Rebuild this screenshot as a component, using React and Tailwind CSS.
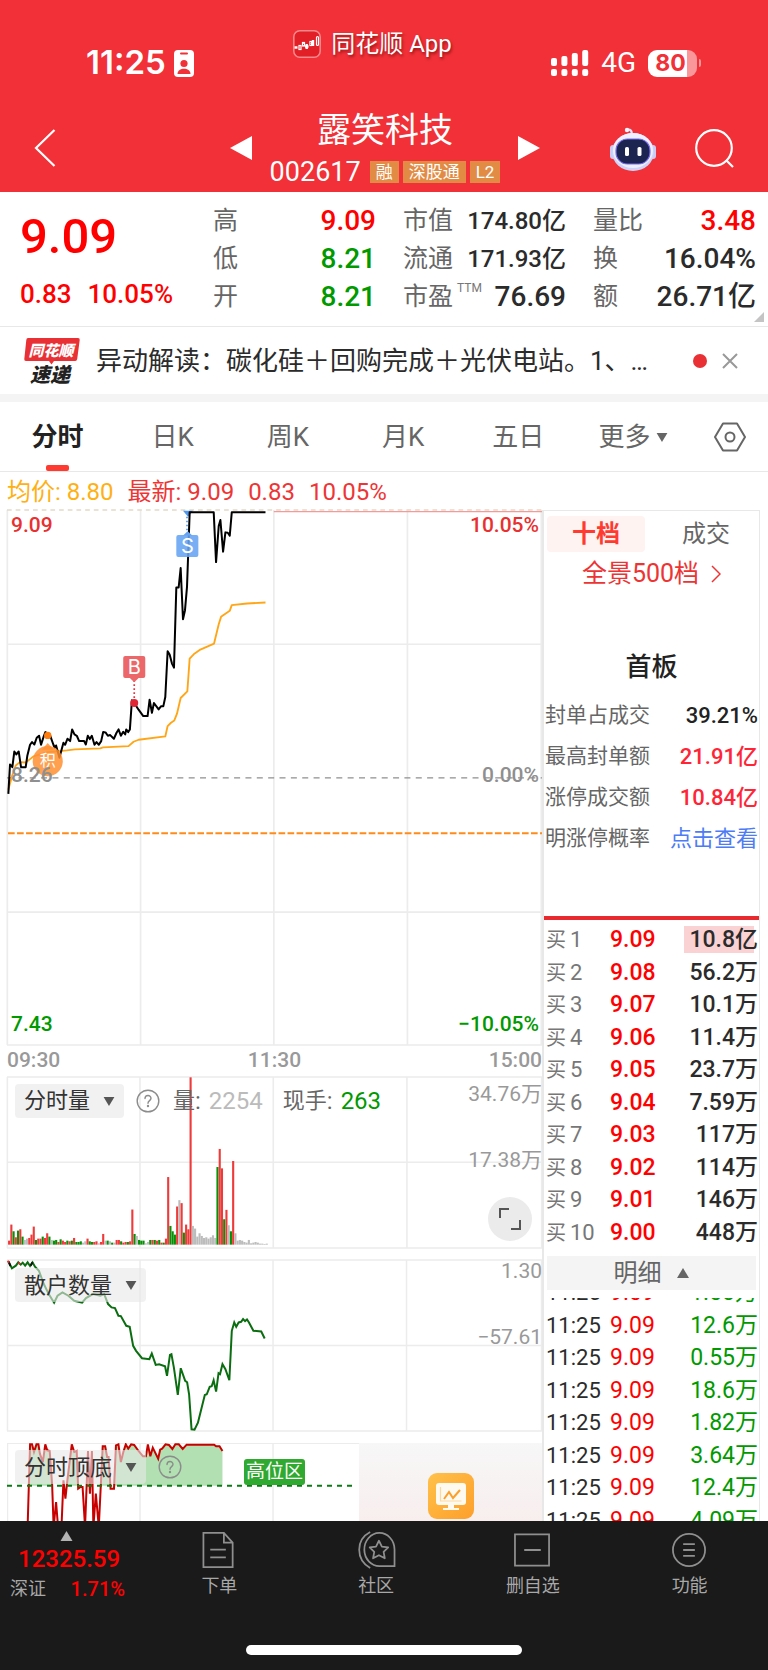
import React, { useState } from 'react'
import clsx from 'clsx'

const GRAY = '#ececec'

const quoteColumns = [
  [
    { label: '高', value: '9.09', color: 'text-[#ff0000]' },
    { label: '低', value: '8.21', color: 'text-[#009900]' },
    { label: '开', value: '8.21', color: 'text-[#009900]' },
  ],
  [
    { label: '市值', value: '174.80亿', small: true },
    { label: '流通', value: '171.93亿', small: true },
    { label: '市盈', value: '76.69', sup: 'TTM' },
  ],
  [
    { label: '量比', value: '3.48', color: 'text-[#ff0000]' },
    { label: '换', value: '16.04%' },
    { label: '额', value: '26.71亿' },
  ],
]

const periods = ['分时', '日K', '周K', '月K', '五日', '更多']

const boardStats = [
  { label: '封单占成交', value: '39.21%', color: 'text-[#222222]' },
  { label: '最高封单额', value: '21.91亿', color: 'text-[#ff2436]' },
  { label: '涨停成交额', value: '10.84亿', color: 'text-[#ff2436]' },
]

const bids = [
  ['9.09', '10.8亿'],
  ['9.08', '56.2万'],
  ['9.07', '10.1万'],
  ['9.06', '11.4万'],
  ['9.05', '23.7万'],
  ['9.04', '7.59万'],
  ['9.03', '117万'],
  ['9.02', '114万'],
  ['9.01', '146万'],
  ['9.00', '448万'],
]

const ticks = ['1.00万', '12.6万', '0.55万', '18.6万', '1.82万', '3.64万', '12.4万', '4.09万']

const PRICE =
  '25,880 30,792 37,800 43,753 49,762 56,753 63,800 77,800 82,765 90,733 96,725 103,732 110,712 117,706 123,733 131,708 136,695 143,700 150,705 160,733 164,742 168,735 178,772 190,727 195,733 202,715 210,722 216,687 223,702 230,706 237,722 252,722 257,732 263,706 269,716 275,706 283,733 289,725 296,733 303,722 309,695 316,696 323,706 330,704 341,715 349,697 355,687 362,706 369,694 375,702 378,687 384,695 389,687 395,600 402,608 415,628 429,647 442,647 448,598 455,637 461,608 475,627 482,618 489,618 495,590 502,453 508,463 515,490 521,502 528,262 535,262 541,204 548,357 554,330 560,260 568,37 640,37 647,186 655,78 660,60 668,155 675,97 682,98 688,107 694,37 795,37'
const AVERAGE =
  '25,868 35,830 47,795 60,785 77,786 90,776 100,768 143,755 178,752 200,750 225,747 300,744 309,741 385,737 400,724 415,718 495,708 502,677 512,667 522,660 530,640 541,593 561,573 568,475 580,462 600,448 641,430 655,372 662,350 676,340 688,332 694,315 740,310 795,307'
const RETAIL =
  '18,62 25,83 33,75 38,65 43,72 47,66 52,75 57,65 62,76 67,65 72,78 80,90 90,130 100,160 111,186 118,165 128,155 140,165 152,180 168,186 176,172 190,160 205,165 213,160 221,190 228,200 235,202 242,225 247,226 258,255 265,258 272,315 278,330 290,352 305,355 310,338 318,372 325,370 337,376 341,405 347,342 350,340 355,380 363,462 369,382 378,420 382,424 386,460 391,565 397,566 404,545 418,462 422,460 428,438 432,436 436,418 441,452 446,397 449,400 454,370 460,385 468,418 473,270 478,245 482,258 487,245 492,243 496,235 500,241 504,236 508,245 517,270 533,272 540,293'
const TOP_BOTTOM =
  '57,860 62,612 66,612 70,635 75,612 79,612 82,640 88,665 93,612 97,630 102,632 107,735 110,860 115,785 119,860 126,860 130,720 134,775 138,720 147,612 152,635 157,632 160,745 165,740 169,740 174,860 180,632 184,760 188,632 191,860 196,760 202,860 210,618 215,618 219,650 222,650 226,745 233,745 237,615 242,612 247,665 252,635 257,612 262,625 268,612 274,614 283,632 292,648 298,648 302,612 307,648 312,622 323,655 327,628 331,625 338,612 345,614 352,626 358,612 365,612 373,626 381,613 437,613 441,618 448,618 454,632'

// one entry per minute: bar height + r(ise) / g(reen fall) / w (flat)
const VOLUME =
  '12r 60r 40g 22r 42g 46r 24g 14w 18w 20r 30r 54r 14g 18r 18r 24g 20r 34r 24g 14w 12g 14g 8r 16g 12r 8r 12g 10r 12g 20r 8g 8g 10g 6w 10w 18r 10g 8g 8r 10r 4w 8r 32r 12w 12g 10w 6g 6w 14r 14r 10g 6r 8r 8g 10r 105r 32g 26w 14g 12g 12g 4w 8w 14g 14r 14g 12r 14g 6r 6g 18r 202r 56g 40g 30g 114r 133w 124r 36g 60r 46r 500r 56w 48w 24w 34w 26w 20w 22w 18w 22w 28w 20w 232g 286r 228r 76g 104r 58w 40g 250r 34w 12w 14w 12w 8w 6w 14w 4w 6w 8w 6w 3w 3w 2w 3w'
    .split(' ')
    .map(s => ({ h: parseInt(s, 10), kind: s.slice(-1) }))
const VOLUME_COLORS = { r: '#ee3a3a', g: '#079007', w: '#bcbcbc' }

function Caret({ up, className }) {
  return (
    <svg viewBox="0 0 12 10" className={className} fill="currentColor" aria-hidden="true">
      <path d={up ? 'M6 0l6 10H0z' : 'M0 0h12L6 10z'} />
    </svg>
  )
}

function Help() {
  return (
    <button aria-label="说明" className="text-[#8c8c8c]">
      <svg viewBox="0 0 24 24" className="size-6" fill="none" stroke="currentColor" strokeWidth="1.4" strokeLinecap="round">
        <circle cx="12" cy="12" r="10.8" />
        <path d="M9 9.600c0-4 6-4 6-.3 0 2.300-3 2.400-3 4.900" />
        <circle cx="12" cy="17" r=".5" fill="currentColor" />
      </svg>
    </button>
  )
}

function IndicatorButton({ children }) {
  return (
    <button className="flex h-[34px] items-center gap-[13px] rounded-[4px] bg-[#e8e8e8]/60 pr-[9px] pl-[9px] text-[22px] text-[#333333]">
      {children}
      <Caret className="h-[9px] w-3 text-[#555555]" />
    </button>
  )
}

function StatusBar() {
  return (
    <div className="flex h-[104px] items-start justify-between pr-[67px] pl-[86px]">
      <div className="flex h-[126px] items-center gap-2 font-['Inter',sans-serif]">
        <span className="text-[33px] font-semibold">11:25</span>
        <svg viewBox="0 0 20 27" className="h-[27px] w-5">
          <rect width="20" height="27" rx="4" fill="#fff" />
          <rect x="6" y="2.500" width="8" height="2" rx="1" fill="#f13037" />
          <circle cx="10" cy="13.500" r="3.600" fill="#f13037" />
          <path d="M3.500 24c0-7 13-7 13 0z" fill="#f13037" />
        </svg>
      </div>
      <div className="flex h-[88px] items-center gap-[10px]">
        <svg viewBox="0 0 28 28" className="size-7">
          <rect x=".8" y=".8" width="26.400" height="26.400" rx="6" fill="#e21f27" stroke="#f78a8d" strokeWidth="1.500" />
          <g stroke="#fff" strokeWidth="1.200" fill="#fff">
            <path d="M1.500 17.500h3M12 16.500h3.500M13.700 14v5M20 10v6" strokeWidth="2.400" />
            <rect x="6" y="15.500" width="2" height="4" fill="none" />
            <rect x="9.500" y="12.500" width="2" height="3.500" fill="none" />
            <rect x="17" y="11.500" width="1.500" height="4" fill="none" />
            <rect x="23.500" y="6.500" width="2" height="9" rx="1" fill="none" />
          </g>
        </svg>
        <span className="text-[24px] [text-shadow:1px_2px_3px_rgba(80,0,0,0.6)]">同花顺 App</span>
      </div>
      <div className="flex h-[126px] items-center font-['Inter',sans-serif]">
        <svg viewBox="0 0 38 26" className="h-[26px] w-[38px]" fill="#fff">
          {[0, 1, 2, 3].map(i => (
            <g key={i}>
              <rect x={i * 10.400} y={[8, 6, 3, 0][i]} width="6" height={[8, 10, 13, 16][i]} rx="2" />
              <rect x={i * 10.400} y="19" width="6" height="7" rx="2" />
            </g>
          ))}
        </svg>
        <span className="ml-3 font-['Roboto',sans-serif] text-[28px]">4G</span>
        <span className="ml-3 flex h-[27px] w-[49px] items-center justify-center rounded-[9px] bg-[linear-gradient(90deg,#fff_80%,#f9979b_80%)] pr-1 text-[23px] font-bold text-[#f13037]">
          80
        </span>
        <span className="ml-[2px] h-2 w-[2px] rounded-r bg-[#f9979b]" />
      </div>
    </div>
  )
}

function Robot() {
  return (
    <svg viewBox="0 0 46 44" className="h-11 w-[46px]">
      <path d="M21 8c2-4-1-6-4-5" stroke="#dfe3fb" strokeWidth="2.200" fill="none" strokeLinecap="round" />
      <circle cx="17" cy="3" r="2.200" fill="#f2f4ff" />
      <rect x="0" y="18" width="6" height="14" rx="3" fill="#c9cdf5" />
      <rect x="40" y="18" width="6" height="14" rx="3" fill="#c9cdf5" />
      <ellipse cx="23" cy="25" rx="21" ry="19" fill="#cfd3f8" />
      <ellipse cx="23" cy="23.500" rx="20" ry="17.500" fill="#eef0ff" />
      <rect x="6" y="12" width="34" height="25" rx="11.500" fill="#1b2550" stroke="#7a6be8" strokeWidth="1.200" />
      <rect x="15" y="20" width="4" height="9" rx="1.600" fill="#fff" />
      <rect x="27.500" y="20" width="4" height="9" rx="1.600" fill="#fff" />
    </svg>
  )
}

function TitleBar() {
  return (
    <div className="grid h-[88px] grid-cols-[1fr_310px_1fr] items-center pl-[2px]">
      <button aria-label="返回" className="ml-8 w-[22px]">
        <svg viewBox="0 0 22 38" className="h-[38px] w-[22px]" fill="none" stroke="#fff" strokeWidth="2.200">
          <path d="M20.500 1L2 19l18.500 18" />
        </svg>
      </button>
      <div className="flex items-center justify-between">
        <button aria-label="上一只">
          <svg viewBox="0 0 22 24" className="h-6 w-[22px]" fill="#fff"><path d="M22 0v24L0 12z" /></svg>
        </button>
        <div className="flex flex-col items-center gap-[7px]">
          <h1 className="text-[34px] leading-10">露笑科技</h1>
          <div className="flex items-center gap-1 leading-[30px]">
            <span className="mr-[5px] text-[27px]">002617</span>
            {['融', '深股通', 'L2'].map(tag => (
              <span key={tag} className="h-[22px] bg-[#e28b45] px-[6px] text-[17px] leading-[22px]">{tag}</span>
            ))}
          </div>
        </div>
        <button aria-label="下一只">
          <svg viewBox="0 0 22 24" className="h-6 w-[22px]" fill="#fff"><path d="M0 0v24l22-12z" /></svg>
        </button>
      </div>
      <div className="flex items-center justify-end gap-[38px] pt-[2px] pr-[34px]">
        <button aria-label="助手"><Robot /></button>
        <button aria-label="搜索">
          <svg viewBox="0 0 40 40" className="size-10" fill="none" stroke="#fff" strokeWidth="2.200">
            <circle cx="20" cy="19" r="17.800" />
            <path d="M32 31l7 7" />
          </svg>
        </button>
      </div>
    </div>
  )
}

function Quote() {
  return (
    <section className="relative grid grid-cols-[166px_1fr_1fr_1fr] gap-x-[27px] border-b border-[#e8e8e8] pt-[10px] pr-3 pb-[10px] pl-5">
      <div className="flex flex-col font-medium text-[#ff0000]">
        <div className="pt-[6px] text-[49px] leading-[58px]">9.09</div>
        <div className="flex gap-4 pt-3 text-[26px] leading-8">
          <span>0.83</span>
          <span>10.05%</span>
        </div>
      </div>
      {quoteColumns.map((rows, i) => (
        <dl key={i}>
          {rows.map(row => (
            <div key={row.label} className="flex h-[38px] items-center whitespace-nowrap">
              <dt className="text-[25px] text-[#666666]">{row.label}</dt>
              {row.sup && <span className="ml-1 self-start text-[12px] leading-5 text-[#777777]">{row.sup}</span>}
              <dd
                className={clsx(
                  'ml-auto font-medium',
                  row.small ? 'text-[24px]' : 'text-[28px]',
                  row.color || 'text-[#2b2b2b]'
                )}
              >
                {row.value}
              </dd>
            </div>
          ))}
        </dl>
      ))}
      <svg viewBox="0 0 10 10" className="absolute right-1 bottom-1 size-[10px]" fill="#c4c4c4"><path d="M10 0v10H0z" /></svg>
    </section>
  )
}

function NewsBar() {
  return (
    <section className="flex h-[67px] items-center pr-[30px] pl-6">
      <svg viewBox="0 0 56 48" className="h-12 w-14 shrink-0" fontFamily="'Noto Sans CJK SC', sans-serif" fontWeight="900" fontStyle="italic">
        <path d="M4 1h50q2 0 1.700 2l-2.500 19q-.3 2-2 2H30l-2.500 3.500L25 24H2q-2 0-1.700-2L2.300 3Q2.500 1 4 1z" fill="#e93035" />
        <text x="27" y="18.500" fontSize="15" fill="#fff" textAnchor="middle">同花顺</text>
        <text x="26" y="45" fontSize="20" fill="#222" textAnchor="middle">速递</text>
      </svg>
      <a href="#news" className="ml-4 grow truncate text-[26px] leading-10 text-[#2b2b2b]">
        异动解读：碳化硅＋回购完成＋光伏电站。1、…
      </a>
      <span className="size-[14px] shrink-0 rounded-full bg-[#e93035]" />
      <button aria-label="关闭" className="ml-[15px] shrink-0">
        <svg viewBox="0 0 16 16" className="size-4" stroke="#999" strokeWidth="2"><path d="M1 1l14 14M15 1L1 15" /></svg>
      </button>
    </section>
  )
}

function PeriodTabs({ period, onChange }) {
  return (
    <nav className="flex h-[70px] items-stretch border-b border-[#e8e8e8] text-[26px]">
      <div className="grid grow grid-cols-6">
        {periods.map(p => (
          <button
            key={p}
            onClick={() => onChange(p)}
            className={clsx(
              'flex flex-col items-center',
              p === period ? 'font-bold text-[#222222]' : 'text-[#666666]'
            )}
          >
            <span className="flex grow items-center gap-[6px] pt-[7px] leading-8">
              {p}
              {p === '更多' && <Caret className="h-[9px] w-3" />}
            </span>
            <span className={clsx('h-[6px] w-[23px] rounded-[2px]', p === period && 'bg-[#ff3a30]')} />
          </button>
        ))}
      </div>
      <button aria-label="设置" className="flex w-[77px] items-center justify-center text-[#666666]">
        <svg viewBox="0 0 32 30" className="h-[30px] w-8" fill="none" stroke="currentColor" strokeWidth="2">
          <path d="M9 1.500h14L31 15l-8 13.500H9L1 15z" strokeLinejoin="round" />
          <circle cx="16" cy="15" r="4.500" />
        </svg>
      </button>
    </nav>
  )
}

function PriceChart() {
  return (
    <div className="relative aspect-square">
      <svg viewBox="21 30 1602 1602" className="block size-full overflow-visible" fill="none">
        <g stroke={GRAY} strokeWidth="5">
          <path d="M22 30v1602M421 30v1602M820 30v1602M1220 30v1602M1621 30v1602M21 432h1602M21 1234h1602M21 1632h1602" />
        </g>
        <path d="M21 30h1602" stroke="#e3d9c6" strokeWidth="4" strokeDasharray="14 12" />
        <path d="M820 35h803" stroke="#f59a9a" strokeWidth="4" />
        <path d="M21 832h1602" stroke="#8f8f8f" strokeWidth="3.500" strokeDasharray="18 16" />
        <path d="M24 998h1599" stroke="#ff8c1a" strokeWidth="6" strokeDasharray="20 7" />
        <polyline points={AVERAGE} stroke="#ffa516" strokeWidth="5.500" strokeLinejoin="round" />
        <path d="M548 32h30l-15 18z" fill="#4f96ee" />
        <path d="M560 50v55" stroke="#4f96ee" strokeWidth="5" strokeDasharray="5 7" />
        <polyline points={PRICE} stroke="#000" strokeWidth="6" strokeLinejoin="round" />
        <path d="M402 540v60" stroke="#e5323e" strokeWidth="5" strokeDasharray="5 7" />
        <circle cx="402" cy="608" r="12" fill="#e02634" />
        <path d="M388 532h28l-14 14z" fill="#ec6769" />
        <rect x="369" y="467" width="66" height="66" rx="6" fill="#ec6769" />
        <rect x="528" y="105" width="66" height="66" rx="6" fill="#65a3f2" fillOpacity=".88" />
        <path d="M548 106h28l-14-12z" fill="#65a3f2" />
        <circle cx="143" cy="705" r="11" fill="#ff7d0f" />
        <path d="M143 728l18 20h-36z" fill="#ff8f33" fillOpacity=".85" />
        <circle cx="143" cy="782" r="45" fill="#ff8f33" fillOpacity=".85" />
        <g fill="#fff" textAnchor="middle" fontFamily="Inter, 'Noto Sans CJK SC', sans-serif">
          <text x="402" y="521" fontSize="60">B</text>
          <text x="561" y="159" fontSize="60">S</text>
          <text x="143" y="798" fontSize="48">积</text>
        </g>
      </svg>
      <div className="absolute inset-0 flex flex-col justify-between pt-px pr-[3px] pb-[7px] pl-1 text-[21px] leading-7 font-medium">
        <div className="flex justify-between text-[#e93030]"><span>9.09</span><span>10.05%</span></div>
        <div className="flex justify-between text-[#8f8f8f]"><span>8.26</span><span>0.00%</span></div>
        <div className="flex justify-between text-[#009900]"><span>7.43</span><span>−10.05%</span></div>
      </div>
    </div>
  )
}

function VolumeChart() {
  return (
    <div className="relative h-[171px]">
      <svg viewBox="21 289 1521 511" preserveAspectRatio="none" className="block size-full overflow-visible">
        <path
          d="M22 289v511M399 289v511M778 289v511M1158 289v511M1541 289v511M21 289h1521M21 544h1521M21 800h1521"
          stroke={GRAY}
          strokeWidth="4.500"
          fill="none"
        />
        {VOLUME.map((bar, i) => (
          <rect key={i} x={24 + i * 6.370} y={790 - bar.h} width="6" height={bar.h} fill={VOLUME_COLORS[bar.kind]} />
        ))}
      </svg>
      <div className="absolute inset-x-0 top-[7px] flex items-center pl-2 text-[24px] leading-[34px]">
        <IndicatorButton>分时量</IndicatorButton>
        <span className="ml-3 flex"><Help /></span>
        <span className="ml-[13px] flex items-center text-[#666666]">
          <span className="text-[22px]">量</span>:
          <span className="ml-2 text-[#bbbbbb]">2254</span>
        </span>
        <span className="ml-5 flex items-center text-[#666666]">
          <span className="text-[22px]">现手</span>:
          <span className="ml-2 text-[#009900]">263</span>
        </span>
      </div>
      <div className="absolute top-[6px] right-0 flex flex-col items-end gap-11 text-[21px] leading-[22px] text-[#999999]">
        <span>34.76万</span>
        <span>17.38万</span>
      </div>
      <button aria-label="全屏" className="absolute right-[10px] bottom-[7px] flex size-11 items-center justify-center rounded-full bg-[#ebebeb]">
        <svg viewBox="0 0 24 24" className="size-6" fill="none" stroke="#555" strokeWidth="2"><path d="M2 11V2h9M22 13v9h-9" /></svg>
      </button>
    </div>
  )
}

function RetailChart() {
  return (
    <div className="relative h-[171px]">
      <svg viewBox="15 58 1090 512" preserveAspectRatio="none" className="block size-full overflow-visible" fill="none">
        <path
          d="M16 58v512M286 58v512M557 58v512M829 58v512M1104 58v512M15 58h1090M15 314h1090M15 570h1090"
          stroke={GRAY}
          strokeWidth="1.500"
          vectorEffect="non-scaling-stroke"
        />
        <polyline points={RETAIL} stroke="#0a6e10" strokeWidth="2" vectorEffect="non-scaling-stroke" />
        <path d="M18 62l4 14M67 65l-4 10" stroke="#111" strokeWidth="2" vectorEffect="non-scaling-stroke" />
        <path d="M16 61l4 4M38 66l4 5" stroke="#d33" strokeWidth="2" vectorEffect="non-scaling-stroke" />
      </svg>
      <div className="absolute top-2 left-2"><IndicatorButton>散户数量</IndicatorButton></div>
      <div className="absolute top-0 right-0 flex flex-col items-end gap-11 text-[21px] leading-[22px] text-[#999999]">
        <span>1.30</span>
        <span>−57.61</span>
      </div>
    </div>
  )
}

function TopBottomChart() {
  return (
    <div className="relative h-[78px] overflow-hidden">
      <svg viewBox="15 608 1090 234" preserveAspectRatio="none" className="block size-full" fill="none">
        <path
          d="M16 608v234M286 608v234M557 608v234M829 608v234M1104 608v234M15 609h1090"
          stroke={GRAY}
          strokeWidth="1.500"
          vectorEffect="non-scaling-stroke"
        />
        <clipPath id="high-zone"><rect x="15" y="608" width="440" height="128" /></clipPath>
        <polygon points={`57,860 ${TOP_BOTTOM} 454,860`} fill="#b2e0b2" clipPath="url(#high-zone)" />
        <polyline points={TOP_BOTTOM} stroke="#c80000" strokeWidth="2" vectorEffect="non-scaling-stroke" />
        <path d="M15 736h712" stroke="#0a7a14" strokeWidth="2" strokeDasharray="5 5" vectorEffect="non-scaling-stroke" />
      </svg>
      <div className="absolute top-[7px] left-2 flex items-center gap-3">
        <IndicatorButton>分时顶底</IndicatorButton>
        <Help />
      </div>
      <span className="absolute top-4 left-[237px] h-[26px] rounded-[3px] bg-[#2fa92f] px-[2px] text-[19px] leading-[26px] text-white">
        高位区
      </span>
      <div className="absolute inset-y-0 right-0 flex w-[183px] items-end justify-center bg-linear-to-b from-[#f7f7f7] to-[#f8eeee] pb-[2px]">
        <svg viewBox="0 0 46 46" className="size-[46px]">
          <defs>
            <linearGradient id="monitor" x1="0" y1="0" x2="1" y2="1">
              <stop offset="0" stopColor="#ffc14a" />
              <stop offset="1" stopColor="#fd9f2b" />
            </linearGradient>
          </defs>
          <rect width="46" height="46" rx="9" fill="url(#monitor)" />
          <rect x="8" y="10" width="30" height="22" rx="3" fill="#fffaf0" />
          <path d="M12.500 14v14h21" stroke="#fbd9a0" strokeWidth="1.200" fill="none" />
          <path d="M16 26l5-7 4 6 7-8" stroke="#fba02c" strokeWidth="2" fill="none" />
          <path d="M20 32h6v3h5v2H15v-2h5z" fill="#fffaf0" />
        </svg>
      </div>
    </div>
  )
}

function OrderBook() {
  const [tab, setTab] = useState('十档')

  return (
    <aside className="relative w-[218px] shrink-0">
      {/* height comes from the charts beside the panel */}
      <div className="absolute inset-0 flex flex-col overflow-hidden border-t border-r border-l-2 border-[#e8e8e8]">
        <div className="grid h-[43px] shrink-0 grid-cols-[98px_1fr] gap-x-2 pt-[5px] pr-0 pl-[3px] text-[24px]">
          {['十档', '成交'].map(name => (
            <button
              key={name}
              onClick={() => setTab(name)}
              className={clsx(
                'h-9 rounded-[4px]',
                tab === name ? 'bg-[#fff3f2] font-bold text-[#ff3a30]' : 'text-[#666666]'
              )}
            >
              {name}
            </button>
          ))}
        </div>
        <a href="#depth" className="flex h-10 shrink-0 items-center justify-center gap-3 text-[25px] text-[#ed3434]">
          全景500档
          <svg viewBox="0 0 10 18" className="h-[18px] w-[10px]" fill="none" stroke="currentColor" strokeWidth="1.500"><path d="M1 1l8 8-8 8" /></svg>
        </a>
        <h2 className="shrink-0 pt-[53px] text-center text-[26px] leading-10 font-medium text-[#222222]">首板</h2>
        <dl className="mt-2 shrink-0 pr-px pl-px text-[21px] text-[#666666]">
          {boardStats.map(s => (
            <div key={s.label} className="flex h-[41px] items-center justify-between">
              <dt>{s.label}</dt>
              <dd className={clsx('text-[22px] font-medium', s.color)}>{s.value}</dd>
            </div>
          ))}
          <div className="flex h-[41px] items-center justify-between">
            <dt>明涨停概率</dt>
            <dd><a href="#odds" className="text-[22px] text-[#4d7cf5]">点击查看</a></dd>
          </div>
        </dl>
        <div className="mt-[57px] h-1 shrink-0 bg-[#e8292d]" />
        <table className="mt-1 h-[325px] w-full shrink-0 table-fixed text-[23px] leading-6">
          <colgroup>
            <col className="w-[66px]" />
            <col className="w-[50px]" />
            <col />
          </colgroup>
          <tbody>
            {bids.map(([price, amount], i) => (
              <tr key={price}>
                <th scope="row" className="pl-[2px] text-left text-[22px] font-normal whitespace-nowrap text-[#777777]">
                  <span className="mr-1 text-[20px]">买</span>{i + 1}
                </th>
                <td className="font-medium text-[#ff0000]">{price}</td>
                <td className="pr-px text-right font-medium text-[#2b2b2b]">
                  <span className={clsx(i === 0 && 'bg-[linear-gradient(90deg,#fad2d3_94%,transparent_94%)] pl-[5px]')}>{amount}</span>
                </td>
              </tr>
            ))}
          </tbody>
        </table>
        <button className="mx-[3px] mt-[7px] flex h-[34px] shrink-0 items-center justify-center gap-[14px] bg-[#f4f4f4] text-[24px] text-[#666666]">
          明细
          <Caret up className="h-[10px] w-[14px]" />
        </button>
        <div className="mt-2 min-h-0 grow overflow-hidden">
          <table className="-mt-[21px] h-[260px] w-full table-fixed text-[23px] leading-6">
            <colgroup>
              <col className="w-[66px]" />
              <col className="w-[50px]" />
              <col />
            </colgroup>
            <tbody>
              {ticks.map(amount => (
                <tr key={amount}>
                  <td className="pl-[2px] text-[22px] text-[#2b2b2b]">11:25</td>
                  <td className="text-[#ff0000]">9.09</td>
                  <td className="pr-px text-right text-[#009900]">{amount}</td>
                </tr>
              ))}
            </tbody>
          </table>
        </div>
      </div>
    </aside>
  )
}

const actions = [
  {
    label: '下单',
    icon: <path d="M3 2h21l9 10v25H3zM24 2v10h9M10 19h16M10 27h16" />,
  },
  {
    label: '社区',
    icon: (
      <>
        <path d="M38 36H23A15.500 17 0 1 1 38 19z" />
        <path d="M13 1C-2 9-2 29 13 38" />
        <path d="M22 10l3 6 6.500.8-4.700 4.700 1.200 6.500-6-3.200-6 3.200 1.200-6.500-4.700-4.700L19 16z" strokeLinejoin="round" />
      </>
    ),
  },
  { label: '删自选', icon: <path d="M1.500 3.500h35v32h-35zM11 19.500h17" /> },
  {
    label: '功能',
    icon: (
      <>
        <circle cx="19" cy="19.500" r="16.500" />
        <path d="M13 13.500h12M13 19.500h12M13 25.500h12" />
      </>
    ),
  },
]

function BottomBar() {
  return (
    <footer className="bg-[#1a1a1a] pb-[15px]">
      <div className="flex h-[124px] pt-[10px]">
        <div className="flex w-[141px] flex-col pl-[10px] text-[#ff0000]">
          <Caret up className="ml-12 h-[10px] w-[17px] text-[#b3b3b3]" />
          <span className="mt-1 ml-2 text-[24px] leading-7 font-medium">12325.59</span>
          <span className="mt-[2px] flex items-center justify-between pr-4 text-[20px] leading-7 font-medium">
            <span className="text-[18px] font-normal text-[#a8a8a8]">深证</span>
            1.71%
          </span>
        </div>
        {actions.map(a => (
          <button key={a.label} className="flex flex-1 flex-col items-center text-[18px] leading-6 text-[#a8a8a8]">
            <svg viewBox="0 0 39 39" className="mb-[5px] h-[38px] w-[39px]" fill="none" stroke="#8f8f8f" strokeWidth="1.800">
              {a.icon}
            </svg>
            {a.label}
          </button>
        ))}
      </div>
      <div className="mx-auto h-[10px] w-[276px] rounded-full bg-white" />
    </footer>
  )
}

export default function App() {
  const [period, setPeriod] = useState('分时')

  return (
    <div className="w-full bg-white font-['Roboto','Noto_Sans_CJK_SC',sans-serif]">
      <header className="bg-[#f23037] text-white">
        <StatusBar />
        <TitleBar />
      </header>
      <Quote />
      <NewsBar />
      <div className="h-2 bg-[#f4f4f4]" />
      <PeriodTabs period={period} onChange={setPeriod} />

      <div className="flex h-[38px] items-center gap-[14px] pt-px pl-[7px] text-[24px] text-[#ee3535]">
        <span className="text-[#ffb012]">均价: 8.80</span>
        <span>最新: 9.09</span>
        <span>0.83</span>
        <span>10.05%</span>
      </div>

      <main className="flex pr-2 pl-[7px]">
        <div className="min-w-0 grow">
          <PriceChart />
          <div className="flex h-8 items-center justify-between text-[21px] font-medium text-[#999999]">
            <span>09:30</span>
            <span>11:30</span>
            <span>15:00</span>
          </div>
          <VolumeChart />
          <div className="h-3" />
          <RetailChart />
          <div className="h-3" />
          <TopBottomChart />
        </div>
        <OrderBook />
      </main>

      <BottomBar />
    </div>
  )
}
